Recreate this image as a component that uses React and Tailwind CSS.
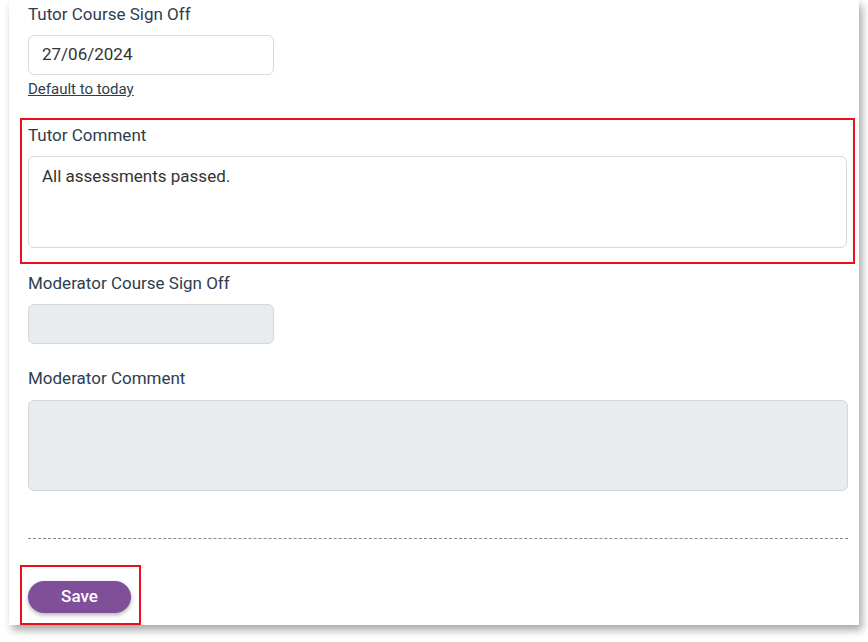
import React from "react";

export default function App() {
  return (
    <div className="w-[868px] h-[642px] bg-white font-['Roboto','Liberation_Sans',sans-serif] overflow-hidden">
      <div className="ml-[9px] w-[850px] h-[625px] bg-white shadow-[3px_5px_8px_rgba(0,0,0,0.35)] pl-[19px] pt-[2px]">
        {/* Tutor sign off */}
        <div className="text-[17px] leading-6 text-[#2c3e50]">Tutor Course Sign Off</div>
        <div className="mt-[9px] w-[246px] h-[40px] rounded-md border border-[#d9d9d9] flex items-center px-[13px] text-[17px] text-[#333]">
          27/06/2024
        </div>
        <a className="block mt-[4px] w-fit text-[15px] leading-5 text-[#2c3e50] underline">Default to today</a>

        {/* Tutor comment */}
        <div className="mt-[19px] -ml-[8px] w-[835px] border-2 border-[#e8101c] pl-[6px] pr-[6px] pt-[3px] pb-[14px]">
          <div className="text-[17px] leading-6 text-[#2c3e50]">Tutor Comment</div>
          <div className="mt-[9px] h-[92px] rounded-md border border-[#d9d9d9] px-[13px] pt-[7px] text-[17px] text-[#333]">
            All assessments passed.
          </div>
        </div>

        {/* Moderator sign off */}
        <div className="mt-[7px] text-[17px] leading-6 text-[#2c3e50]">Moderator Course Sign Off</div>
        <div className="mt-[9px] w-[246px] h-[40px] rounded-md border border-[#d3d6da] bg-[#e9ecef]" />

        <div className="mt-[22px] text-[17px] leading-6 text-[#2c3e50]">Moderator Comment</div>
        <div className="mt-[10px] w-[820px] h-[91px] rounded-md border border-[#d3d6da] bg-[#e9ecef]" />

        <div className="mt-[47px] w-[820px] border-t border-dashed border-[#8a8a8a]" />

        {/* Save */}
        <div className="mt-[26px] -ml-[8px] w-[121px] h-[60px] border-2 border-[#e8101c] pl-[6px] pt-[14px]">
          <button className="w-[103px] h-[32px] rounded-full bg-[#7f4f9a] text-white text-[17px] font-medium shadow-[0_2px_4px_rgba(0,0,0,0.3)]">
            Save
          </button>
        </div>
      </div>
    </div>
  );
}
